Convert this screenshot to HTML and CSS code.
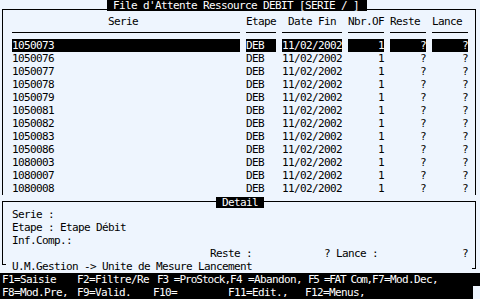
FILE: index.html
```
<!DOCTYPE html>
<html lang="fr">
<head>
    <meta charset="UTF-8">
    <title>File d'Attente Ressource</title>
    <link rel="stylesheet" href="styles.css">
</head>
<body>
    <div class="screen">
        <div class="frame main">
            <div class="title">File d'Attente Ressource DEBIT [SERIE / ]</div>
            <div class="row head">
                <span class="c serie">Serie</span>
                <span class="c etape">Etape</span>
                <span class="c date">Date Fin</span>
                <span class="c nbr">Nbr.OF</span>
                <span class="c reste">Reste</span>
                <span class="c lance">Lance</span>
            </div>
            <div class="row sel"><span class="c serie">1050073</span><span class="c etape">DEB</span><span class="c date">11/02/2002</span><span class="c nbr">1</span><span class="c reste">?</span><span class="c lance">?</span></div>
            <div class="row"><span class="c serie">1050076</span><span class="c etape">DEB</span><span class="c date">11/02/2002</span><span class="c nbr">1</span><span class="c reste">?</span><span class="c lance">?</span></div>
            <div class="row"><span class="c serie">1050077</span><span class="c etape">DEB</span><span class="c date">11/02/2002</span><span class="c nbr">1</span><span class="c reste">?</span><span class="c lance">?</span></div>
            <div class="row"><span class="c serie">1050078</span><span class="c etape">DEB</span><span class="c date">11/02/2002</span><span class="c nbr">1</span><span class="c reste">?</span><span class="c lance">?</span></div>
            <div class="row"><span class="c serie">1050079</span><span class="c etape">DEB</span><span class="c date">11/02/2002</span><span class="c nbr">1</span><span class="c reste">?</span><span class="c lance">?</span></div>
            <div class="row"><span class="c serie">1050081</span><span class="c etape">DEB</span><span class="c date">11/02/2002</span><span class="c nbr">1</span><span class="c reste">?</span><span class="c lance">?</span></div>
            <div class="row"><span class="c serie">1050082</span><span class="c etape">DEB</span><span class="c date">11/02/2002</span><span class="c nbr">1</span><span class="c reste">?</span><span class="c lance">?</span></div>
            <div class="row"><span class="c serie">1050083</span><span class="c etape">DEB</span><span class="c date">11/02/2002</span><span class="c nbr">1</span><span class="c reste">?</span><span class="c lance">?</span></div>
            <div class="row"><span class="c serie">1050086</span><span class="c etape">DEB</span><span class="c date">11/02/2002</span><span class="c nbr">1</span><span class="c reste">?</span><span class="c lance">?</span></div>
            <div class="row"><span class="c serie">1080003</span><span class="c etape">DEB</span><span class="c date">11/02/2002</span><span class="c nbr">1</span><span class="c reste">?</span><span class="c lance">?</span></div>
            <div class="row"><span class="c serie">1080007</span><span class="c etape">DEB</span><span class="c date">11/02/2002</span><span class="c nbr">1</span><span class="c reste">?</span><span class="c lance">?</span></div>
            <div class="row"><span class="c serie">1080008</span><span class="c etape">DEB</span><span class="c date">11/02/2002</span><span class="c nbr">1</span><span class="c reste">?</span><span class="c lance">?</span></div>
        </div>

        <div class="frame detail">
            <div class="label">Detail</div>
            <div class="line">Serie :</div>
            <div class="line">Etape : Etape Débit</div>
            <div class="line">Inf.Comp.:</div>
            <div class="totals">
                <span class="t-reste">Reste :</span>
                <span class="t-lance">? Lance :</span>
                <span>?</span>
            </div>
        </div>

        <div class="um">
            <span class="corner-l"></span>
            <span class="um-text">U.M.Gestion -&gt; Unite de Mesure Lancement</span>
            <span class="corner-r"></span>
        </div>

        <div class="keys">
            <div class="keyline">
                <span class="k w75">F1=Saisie</span>
                <span class="k w80">F2=Filtre/Re</span>
                <span class="k w73 tight">F3 =ProStock,</span>
                <span class="k w78">F4 =Abandon,</span>
                <span class="k w64 tighter">F5 =FAT Com,</span>
                <span class="k">F7=Mod.Dec,</span>
            </div>
            <div class="keyline short">
                <span class="k w75">F8=Mod.Pre,</span>
                <span class="k w76">F9=Valid.</span>
                <span class="k w75">F10=</span>
                <span class="k w77">F11=Edit.,</span>
                <span class="k">F12=Menus,</span>
            </div>
        </div>
    </div>
</body>
</html>
```

FILE: styles.css
```
* {
    box-sizing: border-box;
    margin: 0;
    padding: 0;
}
body {
    background-color: #eef5fe;
}
.screen {
    width: 480px;
    height: 299px;
    overflow: hidden;
    background: #eef5fe;
    color: #000;
    font-family: "DejaVu Sans Mono", monospace;
    font-size: 11px;
    letter-spacing: -0.62px;
    line-height: 13px;
    white-space: nowrap;
}
.frame {
    margin-left: 2px;
    width: 474px;
    border: 1px solid #000;
    border-bottom: none;
}
.main {
    margin-top: 9px;
}
.title {
    margin-top: -10px;
    margin-left: 104px;
    width: 260px;
    height: 11px;
    line-height: 11px;
    padding-left: 6px;
    background: #000;
    color: #fff;
}
.row {
    display: flex;
    gap: 6px;
    padding-left: 9px;
    height: 13px;
}
.c {
    flex: none;
}
.serie { width: 228px; }
.etape { width: 30px; }
.date { width: 60px; }
.nbr, .reste, .lance {
    width: 36px;
    text-align: right;
}
.head {
    margin-top: 4px;
    margin-bottom: 6px;
    height: 18px;
}
.head .c {
    padding-bottom: 4px;
    border-bottom: 1px solid #000;
    text-align: left;
}
.head .serie { padding-left: 96px; }
.head .date { padding-left: 6px; }
.sel .c {
    background: #000;
    color: #fff;
}
.detail {
    margin-top: 6px;
}
.label {
    margin-top: -5px;
    margin-left: 213px;
    width: 48px;
    height: 11px;
    line-height: 11px;
    background: #000;
    color: #fff;
    text-align: center;
}
.line {
    padding-left: 9px;
    height: 13px;
}
.totals {
    display: flex;
    height: 13px;
}
.t-reste {
    margin-left: 207px;
    width: 114px;
}
.t-lance {
    width: 138px;
}
.um {
    display: flex;
    align-items: flex-start;
    height: 13px;
}
.corner-l {
    margin-left: 2px;
    width: 4px;
    height: 5px;
    border-left: 1px solid #000;
    border-bottom: 1px solid #000;
}
.um-text {
    margin-left: 6px;
}
.corner-r {
    margin-left: auto;
    margin-right: 4px;
    width: 4px;
    height: 9px;
    border-right: 1px solid #000;
    border-bottom: 1px solid #000;
}
.keyline {
    display: flex;
    height: 13px;
    padding-left: 2px;
    background: #000;
    color: #fff;
}
.keyline.short {
    margin-right: 7px;
}
.k { flex: none; }
.tight { letter-spacing: -1px; }
.tighter { letter-spacing: -1.3px; }
.w64 { width: 64px; }
.w73 { width: 73px; }
.w75 { width: 75px; }
.w76 { width: 76px; }
.w77 { width: 77px; }
.w78 { width: 78px; }
.w80 { width: 80px; }
```
